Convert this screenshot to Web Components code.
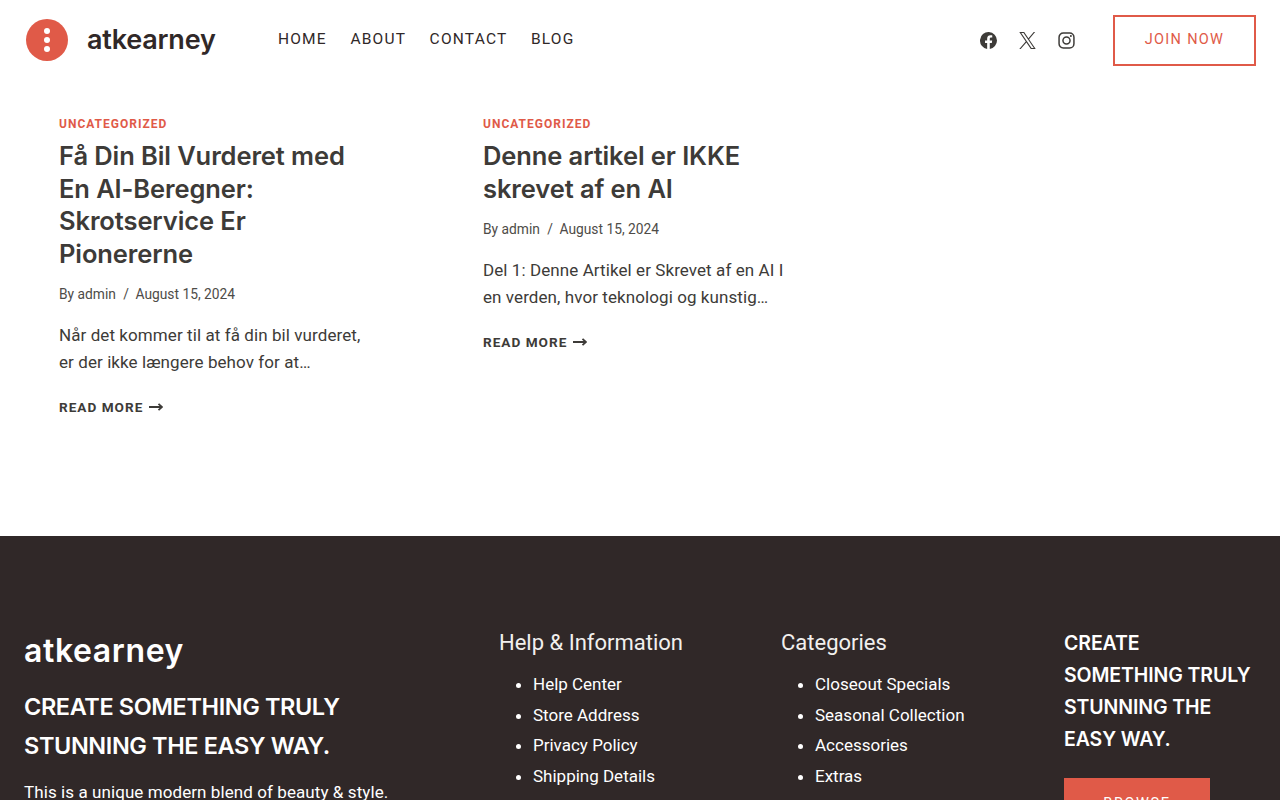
<!DOCTYPE html>
<html lang="en">
<head>
<meta charset="utf-8">
<title>atkearney</title>
<style>
    html, body { margin: 0; height: 800px; overflow: hidden; background: #fff; }
    body { font-family: Roboto, "Noto Sans", sans-serif; color: #3d3b38; }
</style>
</head>
<body>
<site-header></site-header>
<post-grid>
    <post-card heading="Få Din Bil Vurderet med En AI-Beregner: Skrotservice Er Pionererne"
        excerpt="Når det kommer til at få din bil vurderet, er der ikke længere behov for at…"></post-card>
    <post-card heading="Denne artikel er IKKE skrevet af en AI"
        excerpt="Del 1: Denne Artikel er Skrevet af en AI I en verden, hvor teknologi og kunstig…"></post-card>
</post-grid>
<site-footer></site-footer>

<script>
const HEAD_FONT = `Inter, "Liberation Sans", sans-serif`

function def(name, html) {
    customElements.define(name, class extends HTMLElement {
        constructor() {
            super()
            let out = html
            for (const attr of html.matchAll(/{{(\w+)}}/g)) {
                out = out.replaceAll(attr[0], this.getAttribute(attr[1]) ?? "")
            }
            this.attachShadow({ mode: "open" }).innerHTML = out
        }
    })
}

def("site-header", /*html*/`
    <style>
        :host { display: flex; align-items: center; height: 81px; padding: 0 24px 0 26px; color: #302828; }
        .logo { display: flex; align-items: center; gap: 19px; width: 252px; margin-top: -1px; }
        .brand { font: 600 27px/1 ${HEAD_FONT}; letter-spacing: -.2px; margin-top: -2px; }
        nav { display: flex; gap: 23.500px; font-size: 15.500px; letter-spacing: 1.200px; margin-top: -4px; flex: 1; }
        .social { display: flex; gap: 22px; align-items: center; margin-right: 38px; color: #3d3b38; }
        svg { display: block; }
        .join { box-sizing: border-box; width: 143px; height: 51px; border: 2px solid #e05a48; color: #e05a48;
            display: flex; align-items: center; justify-content: center; font-size: 14.500px; letter-spacing: 1.300px;
            padding-bottom: 2px; }
    </style>
    <div class="logo">
        <svg width="42" height="42" viewBox="0 0 42 42"><circle cx="21" cy="21" r="21" fill="#e05a48"/><circle cx="21" cy="12" r="3" fill="#fff"/><circle cx="21" cy="21" r="3" fill="#fff"/><circle cx="21" cy="30" r="3" fill="#fff"/></svg>
        <span class="brand">atkearney</span>
    </div>
    <nav><span>HOME</span><span>ABOUT</span><span>CONTACT</span><span>BLOG</span></nav>
    <div class="social">
        <svg width="17" height="17" viewBox="0 0 24 24" fill="currentColor"><path d="M24 12a12 12 0 1 0-13.900 11.900v-8.400H7.100V12h3V9.400c0-3 1.800-4.700 4.500-4.700 1.300 0 2.700.2 2.700.2v3h-1.500c-1.500 0-2 .9-2 1.900V12h3.400l-.5 3.500h-2.900v8.400A12 12 0 0 0 24 12z"/></svg>
        <svg width="17" height="17" viewBox="0 0 24 24" fill="currentColor"><path d="M14.200 10.200 22.800 0h-2l-7.500 8.800L7.300 0H.4l9.100 13.300L.4 24h2l8-9.300 6.300 9.300h6.900zM3.200 1.500h3.200L20.900 22.600h-3.200z"/></svg>
        <svg width="17" height="17" viewBox="0 0 24 24" fill="none" stroke="currentColor" stroke-width="2.100"><rect x="1.500" y="1.500" width="21" height="21" rx="6"/><circle cx="12" cy="12" r="5"/><circle cx="18.200" cy="5.800" r="1.400" fill="currentColor" stroke="none"/></svg>
    </div>
    <div class="join">JOIN NOW</div>
`)

def("post-grid", /*html*/`
    <style>
        :host { display: grid; grid-template-columns: 304px 304px; column-gap: 120px; align-items: start;
            height: 455px; box-sizing: border-box; padding: 35px 0 0 59px; }
    </style>
    <slot></slot>
`)

def("post-card", /*html*/`
    <style>
        :host { display: block; }
        .cat { font: 700 12px/16px Roboto, sans-serif; letter-spacing: 1px; color: #e05a48; }
        h2 { margin: 8px 0 0; font: 600 25.500px/32.700px ${HEAD_FONT}; letter-spacing: -.1px; color: #3d3b38; }
        .meta { margin-top: 12.400px; font-size: 13.800px; line-height: 22px; color: #4e4c48; }
        .meta i { font-style: normal; margin: 0 3px 0 4px; }
        p { margin: 17px 0 0; font-size: 17px; line-height: 27px; letter-spacing: .08px; color: #3d3b38; }
        .more { margin-top: 21px; display: flex; align-items: center; gap: 6px;
            font-size: 13.600px; line-height: 20px; font-weight: 700; letter-spacing: 1px; color: #3d3b38; }
    </style>
    <div class="cat">UNCATEGORIZED</div>
    <h2>{{heading}}</h2>
    <div class="meta">By admin <i>/</i> August 15, 2024</div>
    <p>{{excerpt}}</p>
    <div class="more">READ MORE
        <svg width="14" height="8" viewBox="0 0 14 8" fill="none" stroke="currentColor" stroke-width="1.800"><path d="M0 4h13M9.500 .8 13 4 9.500 7.200"/></svg>
    </div>
`)

def("link-list", /*html*/`
    <style>
        :host { display: block; }
        h3 { margin: 1px 0 0; font: 400 22px/32px Roboto, sans-serif; color: #f2f0ee; }
        ul { margin: 10px 0 0; padding-left: 34px; }
        ::slotted(li) { line-height: 30.700px; }
    </style>
    <h3>{{title}}</h3>
    <ul><slot></slot></ul>
`)

def("site-footer", /*html*/`
    <style>
        :host { display: grid; grid-template-columns: 445px 252px 253px 192px; column-gap: 30px;
            background: #302828; color: #fff; height: 264px; box-sizing: border-box;
            padding: 90px 24px 0; overflow: hidden; font-size: 17px; }
        .brand { font: 600 32px/50px ${HEAD_FONT}; letter-spacing: .6px; }
        .tag { margin: 11px 0 0; max-width: 400px; font: 600 23.500px/39px ${HEAD_FONT}; letter-spacing: -.4px; }
        .blurb { margin: 14px 0 0; line-height: 27px; letter-spacing: .08px; }
        .cta { font: 600 19.500px/32px ${HEAD_FONT}; letter-spacing: -.1px; margin-top: 1px; }
        .btn { box-sizing: border-box; margin-top: 23px; width: 146px; height: 52px; padding-bottom: 2px; background: #e05a48;
            display: flex; align-items: center; justify-content: center; font-size: 14.500px; letter-spacing: 1.600px; }
    </style>
    <div>
        <div class="brand">atkearney</div>
        <div class="tag">CREATE SOMETHING TRULY STUNNING THE EASY WAY.</div>
        <div class="blurb">This is a unique modern blend of beauty &amp; style.</div>
    </div>
    <link-list title="Help &amp; Information">
        <li>Help Center</li><li>Store Address</li><li>Privacy Policy</li><li>Shipping Details</li>
    </link-list>
    <link-list title="Categories">
        <li>Closeout Specials</li><li>Seasonal Collection</li><li>Accessories</li><li>Extras</li>
    </link-list>
    <div>
        <div class="cta">CREATE SOMETHING TRULY STUNNING THE EASY WAY.</div>
        <div class="btn">BROWSE</div>
    </div>
`)
</script>
</body>
</html>
